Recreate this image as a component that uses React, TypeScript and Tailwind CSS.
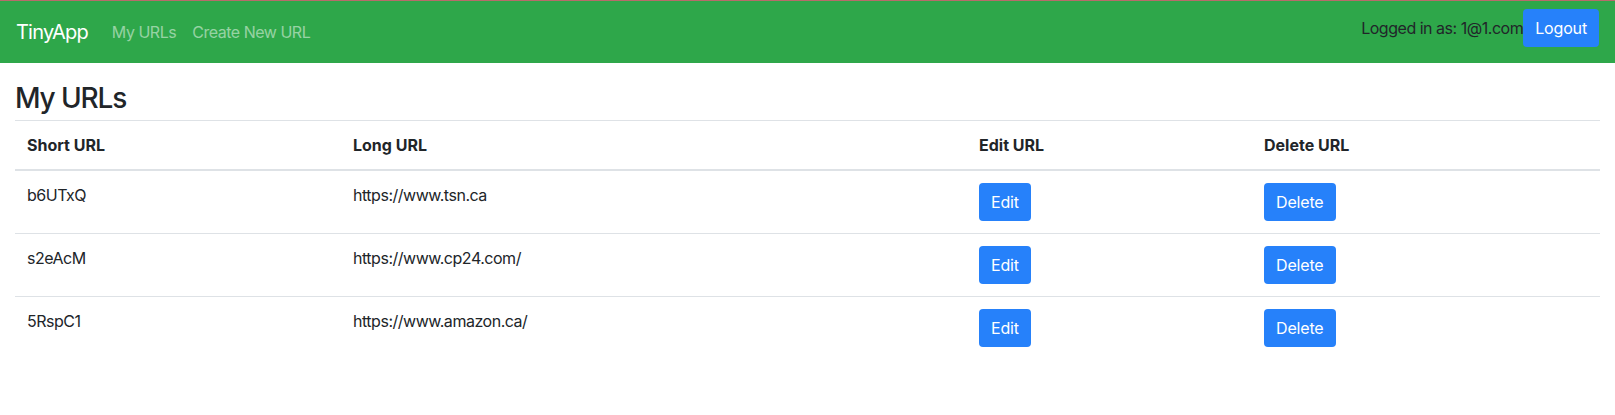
const urls = [
  { id: "b6UTxQ", longURL: "https://www.tsn.ca" },
  { id: "s2eAcM", longURL: "https://www.cp24.com/" },
  { id: "5RspC1", longURL: "https://www.amazon.ca/" },
];

const font = { fontFamily: "Inter, 'Liberation Sans', sans-serif" };

const Header = () => (
  <nav className="flex items-start justify-between border-t border-[#b86b6b] bg-[#2ea74a] px-4 pt-2 h-[63px] tracking-[-0.03em]">
    <div className="flex items-center h-[45px]">
      <a href="#" className="mr-4 text-[20px] leading-[30px] text-white tracking-[-0.04em]">
        TinyApp
      </a>
      <a href="#" className="px-2 text-white/50 leading-6">
        My URLs
      </a>
      <a href="#" className="px-2 text-white/50 leading-6">
        Create New URL
      </a>
    </div>
    <div className="flex items-center">
      <span className="text-[#212529] leading-6">Logged in as: 1@1.com</span>
      <Btn label="Logout" />
    </div>
  </nav>
);

const Btn = ({ label }: { label: string }) => (
  <button
    type="button"
    className="h-[38px] px-3 rounded bg-[#2681fa] text-white leading-6 tracking-[-0.01em]"
  >
    {label}
  </button>
);

const th = "border-t border-b-2 border-[#dee2e6] p-3 font-bold leading-6";

export default function App() {
  return (
    <div className="min-h-screen bg-white text-[#212529] text-base" style={font}>
      <Header />
      <main className="px-[15px]">
        <h3 className="mt-[18px] mb-[5px] text-[28px] font-medium leading-[34px] tracking-[-0.04em]">
          My URLs
        </h3>
        <table className="w-full table-fixed border-collapse text-left">
          <thead>
            <tr>
              <th className={`w-[326px] ${th}`}>Short URL</th>
              <th className={`w-[626px] ${th}`}>Long URL</th>
              <th className={`w-[285px] ${th}`}>Edit URL</th>
              <th className={th}>Delete URL</th>
            </tr>
          </thead>
          <tbody className="tracking-[-0.03em]">
            {urls.map((u, i) => {
              const td = `align-top p-3 leading-6 border-[#dee2e6] ${i > 0 ? "border-t" : ""}`;
              return (
                <tr key={u.id}>
                  <td className={td}>{u.id}</td>
                  <td className={td}>{u.longURL}</td>
                  <td className={td}>
                    <Btn label="Edit" />
                  </td>
                  <td className={td}>
                    <Btn label="Delete" />
                  </td>
                </tr>
              );
            })}
          </tbody>
        </table>
      </main>
    </div>
  );
}
